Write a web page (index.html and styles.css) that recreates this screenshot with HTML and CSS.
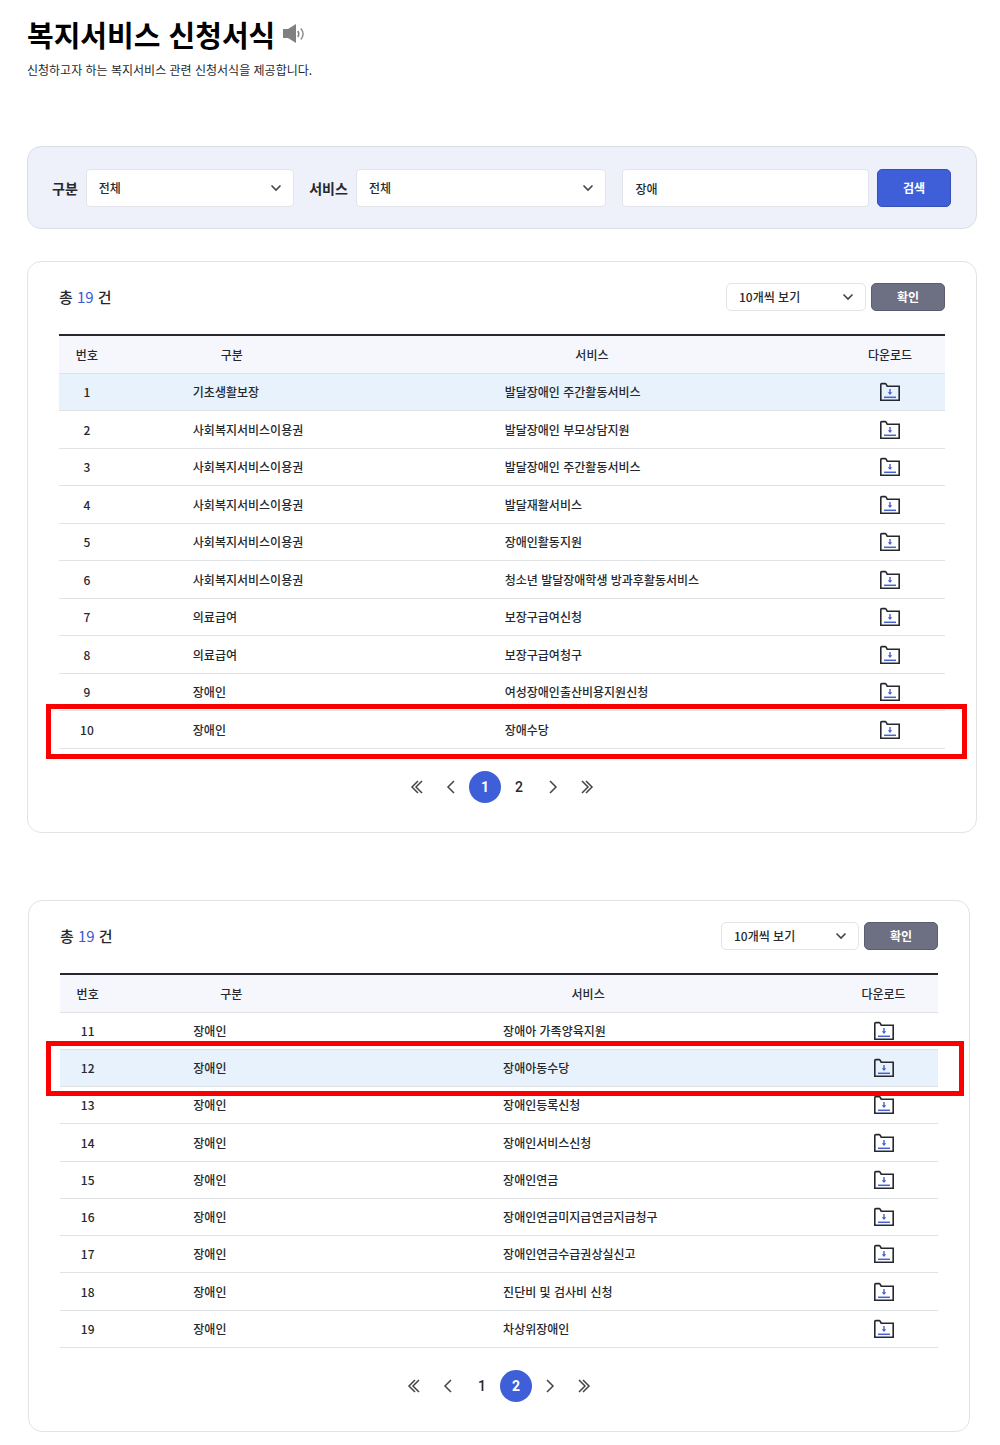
FILE: index.html
```html
<!DOCTYPE html>
<html lang="ko">
<head>
<meta charset="utf-8">
<meta name="viewport" content="width=device-width, initial-scale=1">
<title>복지서비스 신청서식</title>
<link rel="stylesheet" href="styles.css">
</head>
<body>
<svg class="sprite" aria-hidden="true">
  <symbol id="chevron" viewBox="0 0 12 8"><path d="M1.500 1.500 6 6l4.500-4.500" fill="none" stroke="#444" stroke-width="1.600"/></symbol>
  <symbol id="folder" viewBox="0 0 22 20">
    <path d="M1.800 18.200V2.600q0-1 1-1h3.400q.6 0 .9.600l1.100 2H20.200v14z" fill="none" stroke="#25282e" stroke-width="1.600"/>
    <path d="M11 7v5" fill="none" stroke="#4560d0" stroke-width="1.400"/>
    <path d="M8.800 10.300h4.400L11 13z" fill="#4560d0"/>
    <path d="M5 15.300h12" fill="none" stroke="#4560d0" stroke-width="1.500"/>
  </symbol>
  <symbol id="prev" viewBox="0 0 14 14"><path d="M10 1 4 7l6 6" fill="none" stroke="#444" stroke-width="1.500"/></symbol>
  <symbol id="next" viewBox="0 0 14 14"><path d="m4 1 6 6-6 6" fill="none" stroke="#444" stroke-width="1.500"/></symbol>
  <symbol id="first" viewBox="0 0 14 14"><path d="M8 1 2 7l6 6M12 1 6 7l6 6" fill="none" stroke="#444" stroke-width="1.500"/></symbol>
  <symbol id="last" viewBox="0 0 14 14"><path d="m2 1 6 6-6 6M6 1l6 6-6 6" fill="none" stroke="#444" stroke-width="1.500"/></symbol>
</svg>

<main class="page">
  <header class="intro">
    <div class="title-row">
      <h1 class="title">복지서비스 신청서식</h1>
      <button class="speak" type="button" aria-label="음성 듣기">
        <svg width="22" height="20" viewBox="0 0 22 20">
          <path d="M0 5h5l8-5v19l-8-5H0z" fill="#808080"/>
          <path d="M14.800 7q2 3 0 6" fill="none" stroke="#808080" stroke-width="1.500"/>
          <path d="M17.800 4.500q4.500 5.500 0 11" fill="none" stroke="#909090" stroke-width="1.500"/>
        </svg>
      </button>
    </div>
    <p class="lead">신청하고자 하는 복지서비스 관련 신청서식을 제공합니다.</p>
  </header>

  <form class="search">
    <label class="search-label" for="kind">구분</label>
    <div class="select select-kind">
      <select id="kind"><option>전체</option></select>
      <svg class="chevron"><use href="#chevron"/></svg>
    </div>
    <label class="search-label search-label-next" for="service">서비스</label>
    <div class="select select-service">
      <select id="service"><option>전체</option></select>
      <svg class="chevron"><use href="#chevron"/></svg>
    </div>
    <input class="keyword" type="text" value="장애" aria-label="검색어">
    <button class="button button-search" type="button">검색</button>
  </form>

  <section class="card">
    <div class="toolbar">
      <p class="count">총 <span class="count-number">19</span> 건</p>
      <div class="select select-size">
        <select aria-label="목록 개수"><option>10개씩 보기</option></select>
        <svg class="chevron"><use href="#chevron"/></svg>
      </div>
      <button class="button button-confirm" type="button">확인</button>
    </div>
    <table class="forms">
      <thead><tr><th class="col-no">번호</th><th class="col-kind">구분</th><th class="col-service">서비스</th><th class="col-file">다운로드</th></tr></thead>
      <tbody>
        <tr class="active"><td>1</td><td>기초생활보장</td><td>발달장애인 주간활동서비스</td><td><a class="file" href="#" aria-label="다운로드"><svg><use href="#folder"/></svg></a></td></tr>
        <tr><td>2</td><td>사회복지서비스이용권</td><td>발달장애인 부모상담지원</td><td><a class="file" href="#" aria-label="다운로드"><svg><use href="#folder"/></svg></a></td></tr>
        <tr><td>3</td><td>사회복지서비스이용권</td><td>발달장애인 주간활동서비스</td><td><a class="file" href="#" aria-label="다운로드"><svg><use href="#folder"/></svg></a></td></tr>
        <tr><td>4</td><td>사회복지서비스이용권</td><td>발달재활서비스</td><td><a class="file" href="#" aria-label="다운로드"><svg><use href="#folder"/></svg></a></td></tr>
        <tr><td>5</td><td>사회복지서비스이용권</td><td>장애인활동지원</td><td><a class="file" href="#" aria-label="다운로드"><svg><use href="#folder"/></svg></a></td></tr>
        <tr><td>6</td><td>사회복지서비스이용권</td><td>청소년 발달장애학생 방과후활동서비스</td><td><a class="file" href="#" aria-label="다운로드"><svg><use href="#folder"/></svg></a></td></tr>
        <tr><td>7</td><td>의료급여</td><td>보장구급여신청</td><td><a class="file" href="#" aria-label="다운로드"><svg><use href="#folder"/></svg></a></td></tr>
        <tr><td>8</td><td>의료급여</td><td>보장구급여청구</td><td><a class="file" href="#" aria-label="다운로드"><svg><use href="#folder"/></svg></a></td></tr>
        <tr><td>9</td><td>장애인</td><td>여성장애인출산비용지원신청</td><td><a class="file" href="#" aria-label="다운로드"><svg><use href="#folder"/></svg></a></td></tr>
        <tr class="marked"><td>10</td><td>장애인</td><td>장애수당</td><td><a class="file" href="#" aria-label="다운로드"><svg><use href="#folder"/></svg></a></td></tr>
      </tbody>
    </table>
    <nav class="pages" aria-label="페이지">
      <a href="#" aria-label="처음"><svg><use href="#first"/></svg></a>
      <a href="#" aria-label="이전"><svg><use href="#prev"/></svg></a>
      <a class="current" href="#" aria-current="page">1</a>
      <a href="#">2</a>
      <a href="#" aria-label="다음"><svg><use href="#next"/></svg></a>
      <a href="#" aria-label="마지막"><svg><use href="#last"/></svg></a>
    </nav>
  </section>

  <section class="card card-second">
    <div class="toolbar">
      <p class="count">총 <span class="count-number">19</span> 건</p>
      <div class="select select-size">
        <select aria-label="목록 개수"><option>10개씩 보기</option></select>
        <svg class="chevron"><use href="#chevron"/></svg>
      </div>
      <button class="button button-confirm" type="button">확인</button>
    </div>
    <table class="forms">
      <thead><tr><th class="col-no">번호</th><th class="col-kind">구분</th><th class="col-service">서비스</th><th class="col-file">다운로드</th></tr></thead>
      <tbody>
        <tr><td>11</td><td>장애인</td><td>장애아 가족양육지원</td><td><a class="file" href="#" aria-label="다운로드"><svg><use href="#folder"/></svg></a></td></tr>
        <tr class="active marked"><td>12</td><td>장애인</td><td>장애아동수당</td><td><a class="file" href="#" aria-label="다운로드"><svg><use href="#folder"/></svg></a></td></tr>
        <tr><td>13</td><td>장애인</td><td>장애인등록신청</td><td><a class="file" href="#" aria-label="다운로드"><svg><use href="#folder"/></svg></a></td></tr>
        <tr><td>14</td><td>장애인</td><td>장애인서비스신청</td><td><a class="file" href="#" aria-label="다운로드"><svg><use href="#folder"/></svg></a></td></tr>
        <tr><td>15</td><td>장애인</td><td>장애인연금</td><td><a class="file" href="#" aria-label="다운로드"><svg><use href="#folder"/></svg></a></td></tr>
        <tr><td>16</td><td>장애인</td><td>장애인연금미지급연금지급청구</td><td><a class="file" href="#" aria-label="다운로드"><svg><use href="#folder"/></svg></a></td></tr>
        <tr><td>17</td><td>장애인</td><td>장애인연금수급권상실신고</td><td><a class="file" href="#" aria-label="다운로드"><svg><use href="#folder"/></svg></a></td></tr>
        <tr><td>18</td><td>장애인</td><td>진단비 및 검사비 신청</td><td><a class="file" href="#" aria-label="다운로드"><svg><use href="#folder"/></svg></a></td></tr>
        <tr><td>19</td><td>장애인</td><td>차상위장애인</td><td><a class="file" href="#" aria-label="다운로드"><svg><use href="#folder"/></svg></a></td></tr>
      </tbody>
    </table>
    <nav class="pages" aria-label="페이지">
      <a href="#" aria-label="처음"><svg><use href="#first"/></svg></a>
      <a href="#" aria-label="이전"><svg><use href="#prev"/></svg></a>
      <a href="#">1</a>
      <a class="current" href="#" aria-current="page">2</a>
      <a href="#" aria-label="다음"><svg><use href="#next"/></svg></a>
      <a href="#" aria-label="마지막"><svg><use href="#last"/></svg></a>
    </nav>
  </section>
</main>
</body>
</html>
```
FILE: styles.css
```css
* { box-sizing: border-box; }

body {
  margin: 0;
  background: #fff;
  color: #25282e;
  font: 500 12px/20px "Noto Sans CJK KR", sans-serif;
}

button, select, input { font: inherit; color: inherit; }

.sprite { display: none; }

.page { padding: 18px 23px 14px 27px; }

/* Heading */
.title-row { display: flex; align-items: center; gap: 8px; }
.title { margin: 0; color: #000; font-size: 29px; line-height: 32px; font-weight: 700; }
.speak { display: flex; padding: 0; border: 0; background: none; }
.lead { margin: 10px 0 0; font-weight: 400; }

/* Search bar */
.search {
  display: flex;
  align-items: center;
  margin-top: 66px;
  padding: 22px 25px 21px 24px;
  border: 1px solid #dcdee6;
  border-radius: 14px;
  background: #eff1fa;
}
.search-label { margin-right: 8px; font-size: 14px; font-weight: 700; white-space: nowrap; }
.search-label-next { margin-left: 15px; }

.select { position: relative; min-width: 0; }
.select select, .keyword {
  width: 100%;
  height: 38px;
  padding: 0 12px;
  border: 1px solid #e2e4ea;
  border-radius: 4px;
  background: #fff;
  appearance: none;
}
.chevron {
  position: absolute;
  top: 50%;
  right: 12px;
  width: 12px;
  height: 8px;
  margin-top: -4px;
  pointer-events: none;
}
.select-kind { flex: 208 1 208px; }
.select-service { flex: 250 1 250px; }
.keyword { flex: 246 1 246px; min-width: 0; margin: 0 8px 0 16px; }

.button {
  width: 74px;
  padding: 0;
  border: 1px solid;
  border-radius: 5px;
  color: #fff;
  font-weight: 700;
}
.button-search { height: 38px; border-color: #3450b8; background: #3f5fd9; }
.button-confirm { height: 28px; border-color: #5b5d6f; background: #6d6f82; }

/* Result cards */
.card {
  margin-top: 32px;
  padding: 21px 31px 29px;
  border: 1px solid #e2e3e7;
  border-radius: 14px;
}
.card-second { margin: 67px 7px 0 1px; }

.toolbar { display: flex; align-items: center; gap: 5px; }
.count { flex: 1; margin: 0; font-size: 15px; }
.count-number { color: #4157d6; font-weight: 400; }
.select-size { width: 140px; }
.select-size select { height: 28px; border-radius: 5px; }
.card-second .select-size { width: 138px; }

.forms {
  width: 100%;
  margin-top: 23px;
  border-spacing: 0;
  border-top: 2px solid #25282e;
  table-layout: fixed;
}
.forms th, .forms td { height: 37px; padding: 0; border-bottom: 1px solid #e0e2e6; }
.forms th { height: 38px; background: #f6f7fc; font-weight: 500; }
.forms tr:nth-child(even) td { height: 38px; }
.card-second .forms td, .card-second .forms tr:nth-child(even) td { height: 37px; }
.card-second .forms tr:nth-child(4n) td { height: 38px; }
.forms td:first-child, .forms td:last-child { text-align: center; }
.forms td:nth-child(2) { padding-left: 78px; }
.forms td:nth-child(3) { padding-left: 156px; }
.col-no { width: 6.300%; }
.col-kind { width: 26.400%; }
.col-file { width: 12.400%; }
.active td { background: #e8f2fd; }

/* Red frame drawn over the highlighted row */
.marked { position: relative; }
.marked td:first-child::after {
  content: "";
  position: absolute;
  inset: -7px -22px -10px -13px;
  border: 5px solid #fb0000;
  pointer-events: none;
}
.card-second .marked td:first-child::after { inset: -9px -26px -9px -14px; }

.file { display: block; width: 22px; height: 20px; margin: 0 auto; }
.file svg { display: block; width: 22px; height: 20px; }

/* Pagination */
.pages { display: flex; justify-content: center; gap: 2px; margin-top: 22px; }
.pages a {
  display: flex;
  align-items: center;
  justify-content: center;
  width: 32px;
  height: 32px;
  border-radius: 50%;
  color: #25282e;
  font-family: Roboto, sans-serif;
  font-size: 14px;
  text-decoration: none;
}
.pages svg { width: 14px; height: 14px; }
.pages .current { background: #3f5fd9; color: #fff; font-weight: 700; }
```
